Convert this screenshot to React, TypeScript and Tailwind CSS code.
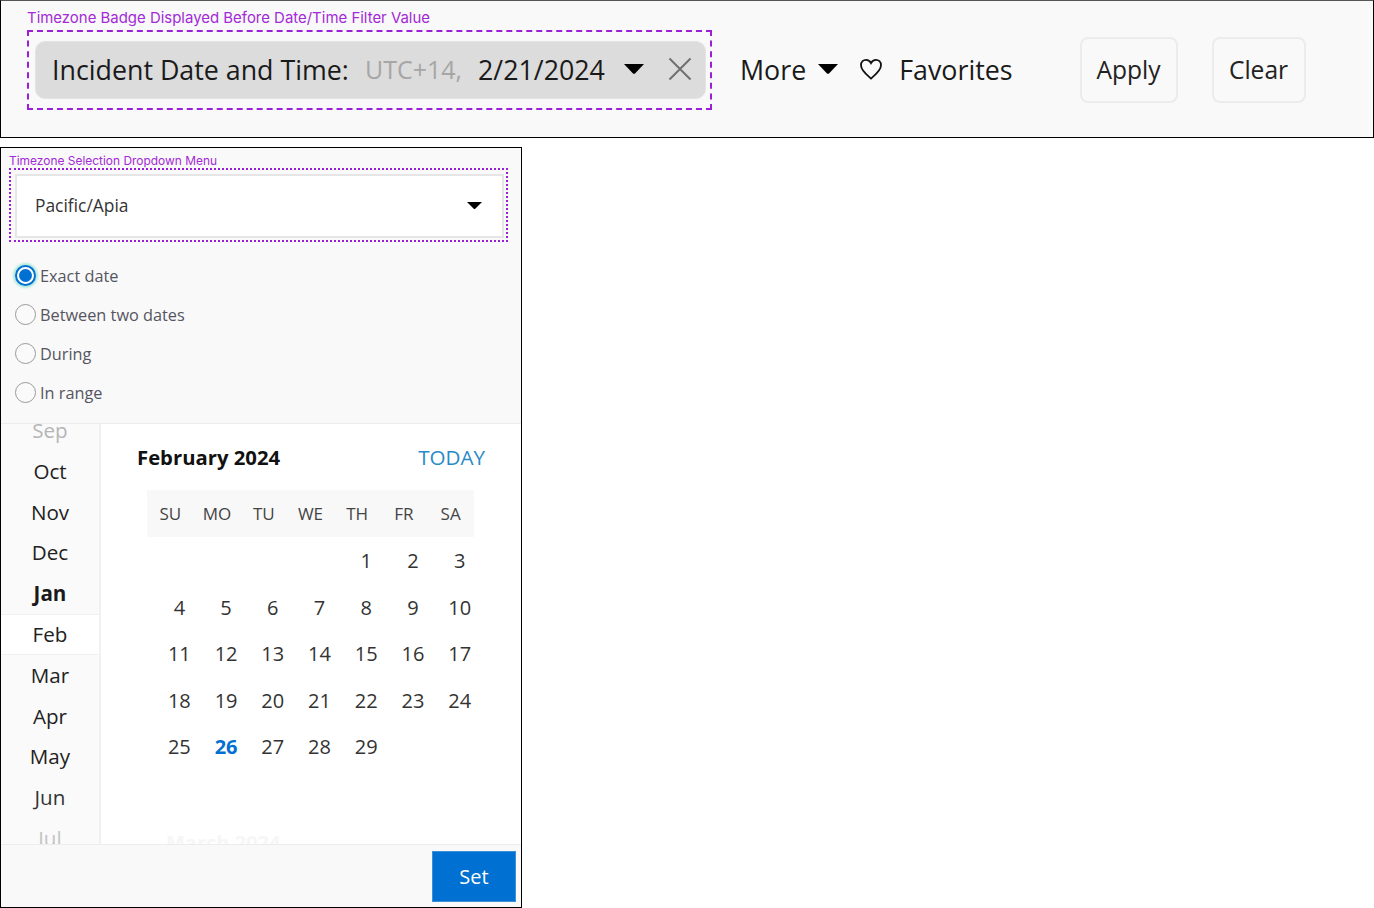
import React from "react";

const Caret = ({ w, h, className = "" }: { w: number; h: number; className?: string }) => (
  <svg width={w} height={h} viewBox="0 0 20 10" preserveAspectRatio="none" className={"shrink-0 " + className}>
    <path d="M0 0H20L11 9.5Q10 10.2 9 9.5Z" fill="#000" />
  </svg>
);

const Radio = ({ label, on }: { label: string; on?: boolean }) => (
  <div className="flex h-[39px] items-center">
    {on ? (
      <span className="ml-[14px] flex h-[21px] w-[21px] items-center justify-center rounded-full border-2 border-[#0070d2] bg-white shadow-[0_0_2px_2px_rgba(120,220,200,0.55)]">
        <span className="h-[13px] w-[13px] rounded-full bg-[#0070d2]" />
      </span>
    ) : (
      <span className="ml-[14px] h-[21px] w-[21px] rounded-full border border-[#9a9a9a] bg-[#fafafa]" />
    )}
    <span className="ml-[4px] translate-y-[1px] text-[16.3px] text-[#55555f]">{label}</span>
  </div>
);

const months = ["Sep", "Oct", "Nov", "Dec", "Jan", "Feb", "Mar", "Apr", "May", "Jun", "Jul"];
const weekdays = ["SU", "MO", "TU", "WE", "TH", "FR", "SA"];
const days: (number | null)[] = [
  null, null, null, null, 1, 2, 3,
  4, 5, 6, 7, 8, 9, 10,
  11, 12, 13, 14, 15, 16, 17,
  18, 19, 20, 21, 22, 23, 24,
  25, 26, 27, 28, 29,
];

export default function App() {
  return (
    <div className="h-[908px] w-[1374px] overflow-hidden bg-white font-['Open_Sans',sans-serif]">
      {/* Filter bar */}
      <div className="h-[138px] border border-black border-t-[#555] bg-[#f9f9f9] pl-[26px]">
        <div className="flex h-[29px] items-end pb-[2px] font-['Inter',sans-serif] text-[14.95px] leading-[20px] text-[#a32ad6]">
          Timezone Badge Displayed Before Date/Time Filter Value
        </div>
        <div className="flex items-center">
          <div className="h-[80px] w-[685px] border-2 border-dashed border-[#9b1fd6] pl-[6px] pt-[9px]">
            <div className="flex h-[58px] w-[671px] items-center whitespace-nowrap rounded-[10px] border border-[#e4e4e4] bg-[#dcdcdc] pl-[16px] text-[26.8px] text-[#1a1a1a]">
              <span>Incident Date and Time:</span>
              <span className="ml-[16px] text-[25px] text-[#a6a6a6]">UTC+14,</span>
              <span className="ml-[16px]">2/21/2024</span>
              <Caret w={20} h={10} className="ml-[19px] -translate-y-[1px]" />
              <svg width="24" height="24" viewBox="0 0 24 24" className="ml-[24px] shrink-0 -translate-y-[1px]">
                <path d="M1.5 1.5L22.5 22.5M22.5 1.5L1.5 22.5" stroke="#707070" strokeWidth="2" fill="none" />
              </svg>
            </div>
          </div>
          <span className="ml-[28px] text-[26.8px] text-[#1a1a1a]">More</span>
          <Caret w={20} h={10} className="ml-[12px] -translate-y-[1px]" />
          <svg width="24" height="22" viewBox="0 0 24 22" className="ml-[21px] -translate-y-[1px]">
            <path
              d="M12 20.5C8 17 2 12.5 2 7.2C2 3.8 4.5 1.8 7 1.8C9.2 1.8 11 3 12 5C13 3 14.8 1.8 17 1.8C19.5 1.8 22 3.8 22 7.2C22 12.5 16 17 12 20.5Z"
              stroke="#111"
              strokeWidth="1.8"
              fill="none"
            />
          </svg>
          <span className="ml-[16px] text-[26.8px] text-[#1a1a1a]">Favorites</span>
          <button className="ml-[67px] flex h-[66px] w-[98px] items-center justify-center rounded-[8px] border-2 border-[#ececec] bg-[#f9f9f9] text-[24.6px] text-[#222]">
            Apply
          </button>
          <button className="ml-[34px] flex h-[66px] w-[94px] items-center justify-center rounded-[8px] border-2 border-[#ececec] bg-[#f9f9f9] text-[24.6px] text-[#222]">
            Clear
          </button>
        </div>
      </div>

      {/* Date panel */}
      <div className="mt-[9px] flex h-[761px] w-[522px] flex-col border border-black bg-[#f9f9f9]">
        <div className="flex h-[20px] items-end pl-[8px] font-['Inter',sans-serif] text-[11.95px] leading-[14px] text-[#a32ad6]">
          Timezone Selection Dropdown Menu
        </div>
        <div className="ml-[8px] h-[74px] w-[499px] border-2 border-dotted border-[#9b1fd6] p-[4px]">
          <div className="flex h-[64px] w-[489px] items-center justify-between border-2 border-[#e6e6e6] bg-white pl-[18px] pr-[20px] text-[17.4px] text-[#333]">
            <span className="-translate-y-[1px]">Pacific/Apia</span>
            <Caret w={15} h={7} className="-translate-y-[1px]" />
          </div>
        </div>
        <div className="mt-[14px] flex h-[167px] flex-col">
          <Radio label="Exact date" on />
          <Radio label="Between two dates" />
          <Radio label="During" />
          <Radio label="In range" />
        </div>
        <div className="flex h-[422px] overflow-hidden border-y border-[#ececec]">
          <div className="h-full w-[100px] shrink-0 overflow-hidden border-r-2 border-[#f1f1f1] bg-[#fafafa]">
            <div className="-mt-[14px]">
              {months.map((m) => (
                <div
                  key={m}
                  className={
                    "flex h-[40.8px] items-center justify-center text-[20.6px] " +
                    (m === "Sep"
                      ? "text-[#b5b5b5]"
                      : m === "Jul"
                        ? "text-[#c4c4c4]"
                        : m === "Jan"
                          ? "font-bold text-[#1a1a1a]"
                          : m === "Feb"
                            ? "-mr-[2px] border-y border-[#f1f1f1] bg-white pr-[2px] text-[#222]"
                            : m === "Jun"
                              ? "text-[#333]"
                              : "text-[#222]")
                  }
                >
                  {m}
                </div>
              ))}
            </div>
          </div>
          <div className="flex-1 overflow-hidden bg-white">
            <div className="flex items-center justify-between pl-[36px] pr-[36px] pt-[18px]">
              <span className="text-[20.3px] font-bold leading-[30px] text-[#111]">February 2024</span>
              <span className="text-[20.6px] leading-[30px] text-[#2a8ac8]">TODAY</span>
            </div>
            <div className="ml-[46px] mt-[18px] grid h-[47px] w-[327px] grid-cols-7 items-center bg-[#f8f8f8] text-center text-[17px] text-[#444]">
              {weekdays.map((d) => (
                <span key={d}>{d}</span>
              ))}
            </div>
            <div className="ml-[55px] mt-[1px] grid w-[327px] grid-cols-7 auto-rows-[46.5px] items-center text-center text-[20px] text-[#333]">
              {days.map((d, i) => (
                <span key={i} className={d === 26 ? "font-bold text-[#0070d2]" : ""}>
                  {d}
                </span>
              ))}
            </div>
            <div className="ml-[65px] mt-[57px] text-[20px] font-bold leading-[30px] text-[#f6f6f6]">March 2024</div>
          </div>
        </div>
        <div className="flex flex-1 justify-end pr-[5px] pt-[6px]">
          <button className="flex h-[51px] w-[84px] items-center justify-center border border-[#3d8fd8] bg-[#0070d2] text-[20px] text-white">
            Set
          </button>
        </div>
      </div>
    </div>
  );
}
